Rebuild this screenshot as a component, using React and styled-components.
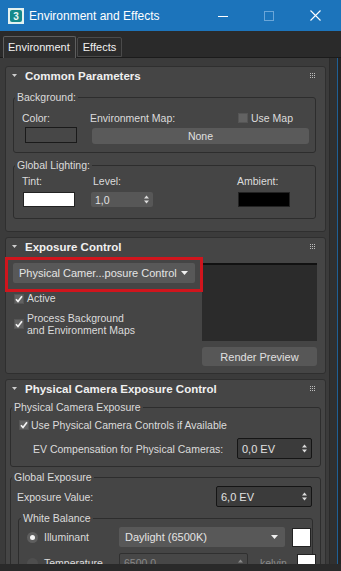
import React from 'react';
import styled, { createGlobalStyle } from 'styled-components';

const GlobalStyle = createGlobalStyle`
  html, body { margin: 0; padding: 0; background: #2b2b2b; }
  body { font-family: "Liberation Sans", Arial, sans-serif; }
  * { box-sizing: border-box; }
`;

const Window = styled.div`
  width: 341px;
  height: 571px;
  display: flex;
  flex-direction: column;
  overflow: hidden;
  background: #2b2b2b;
`;

const TitleBar = styled.div`
  height: 31px;
  flex: none;
  background: #1c74bb;
  display: flex;
  align-items: center;
  padding-left: 8px;
  color: #fff;
`;

const TitleText = styled.span`
  margin-left: 5px;
  font-size: 12px;
  color: #fff;
  white-space: nowrap;
`;

const WinControls = styled.div`
  margin-left: auto;
  display: flex;
  height: 100%;
  padding-right: 3px;
`;

const WinButton = styled.div`
  width: 46px;
  height: 100%;
  display: flex;
  align-items: center;
  justify-content: center;
`;

const TabBar = styled.div`
  height: 27px;
  flex: none;
  display: flex;
  align-items: flex-end;
  gap: 1px;
  padding-left: 3px;
  background: #2a2a2a;
  border-bottom: 1px solid #1b1b1b;
`;

const Tab = styled.div`
  height: ${p => (p.$active ? '22px' : '20px')};
  margin-bottom: ${p => (p.$active ? '-1px' : '0')};
  padding: ${p => (p.$active ? '3px 5px 0 4px' : '2px 5px 0 5px')};
  border: 1px solid ${p => (p.$active ? '#5e5e5e' : '#4a4a4a')};
  border-bottom: ${p => (p.$active ? 'none' : '1px solid #4a4a4a')};
  border-radius: 2px 2px 0 0;
  background: ${p => (p.$active ? '#2e2e2e' : '#2b2b2b')};
  color: #f2f2f2;
  font-size: 11px;
  line-height: 14px;
  white-space: nowrap;
`;

const Body = styled.div`
  flex: 1;
  min-height: 0;
  display: flex;
`;

const Content = styled.div`
  width: 329px;
  flex: none;
  background: #3b3b3b;
  padding: 8px 3px 0 5px;
  display: flex;
  flex-direction: column;
  gap: 5px;
  overflow: hidden;
`;

const ScrollTrack = styled.div`
  width: 8px;
  flex: none;
  background: #303030;
  border-left: 1px solid #2a2a2a;
`;

const Edge = styled.div`
  width: 4px;
  flex: none;
  background: #262626;
  border-left: 1px solid #1f5f95;
`;

const BottomStrip = styled.div`
  height: 7px;
  flex: none;
  background: #2a2a2a;
`;

const Rollout = styled.div`
  flex: none;
  background: #454545;
  border: 1px solid #2f2f2f;
  border-radius: 3px;
`;

const Header = styled.div`
  height: 17px;
  display: flex;
  align-items: center;
  padding: 0 10px 0 6px;
`;

const HeaderTitle = styled.span`
  margin-left: 8px;
  font-size: 11.5px;
  font-weight: bold;
  color: #f0f0f0;
  white-space: nowrap;
`;

const GripBox = styled.span`
  margin-left: auto;
  display: flex;
`;

const RolloutBody = styled.div`
  padding: ${p => p.$pad};
  display: flex;
  flex-direction: ${p => (p.$row ? 'row' : 'column')};
  gap: ${p => p.$gap || 0}px;
`;

const Group = styled.fieldset`
  margin: ${p => p.$margin || '0'};
  padding: 0;
  border: 1px solid #2d2d2d;
  border-radius: 3px;
  min-width: 0;
`;

const Legend = styled.legend`
  margin-left: ${p => p.$ml || 1}px;
  padding: 0 2px;
  font-size: 10.5px;
  line-height: 14px;
  color: #dcdcdc;
  white-space: nowrap;
`;

const GroupBody = styled.div`
  padding: ${p => p.$pad};
  display: ${p => (p.$grid ? 'grid' : 'flex')};
  flex-direction: column;
  grid-template-columns: ${p => p.$cols || 'none'};
  gap: ${p => p.$gap || 0}px;
`;

const Col = styled.div`
  display: flex;
  flex-direction: column;
  gap: ${p => p.$gap || 0}px;
  align-items: flex-start;
`;

const Row = styled.div`
  display: flex;
  align-items: center;
  gap: ${p => p.$gap || 0}px;
  padding: ${p => p.$pad || '0'};
  height: ${p => (p.$h ? p.$h + 'px' : 'auto')};
`;

const Label = styled.span`
  font-size: 10.5px;
  line-height: ${p => p.$lh || 14}px;
  color: ${p => (p.$dim ? '#8c8c8c' : '#dcdcdc')};
  white-space: nowrap;
  width: ${p => (p.$w ? p.$w + 'px' : 'auto')};
  margin-left: ${p => p.$ml || 0}px;
  flex: none;
`;

const Swatch = styled.div`
  width: ${p => p.$w}px;
  height: ${p => p.$h}px;
  margin-left: ${p => p.$ml || 0}px;
  background: ${p => p.$color};
  border: 1px solid ${p => p.$border || '#1c1c1c'};
  flex: none;
`;

const FlatButton = styled.div`
  width: ${p => p.$w}px;
  height: ${p => p.$h}px;
  margin-left: ${p => p.$ml || 0}px;
  background: #5a5a5a;
  border-radius: 3px;
  display: flex;
  align-items: center;
  justify-content: center;
  font-size: 10.5px;
  color: #e0e0e0;
  flex: none;
`;

const Spinner = styled.div`
  width: ${p => p.$w}px;
  height: ${p => p.$h}px;
  margin-left: ${p => p.$ml || 0}px;
  background: ${p => (p.$dark ? '#3b3b3b' : p.$dim ? '#474747' : '#575757')};
  border: ${p => (p.$dark ? '1px solid #151515' : p.$dim ? '1px solid #303030' : 'none')};
  border-radius: 2px;
  display: flex;
  align-items: center;
  padding: 0 4px 0 ${p => p.$pl || 4}px;
  font-size: ${p => p.$fs || 10.5}px;
  color: ${p => (p.$dim ? '#888' : '#e2e2e2')};
  flex: none;
  & > svg { margin-left: auto; }
`;

const Dropdown = styled.div`
  position: relative;
  width: ${p => p.$w}px;
  height: ${p => p.$h}px;
  background: #585858;
  border-radius: 2px;
  display: flex;
  align-items: center;
  padding: 0 7px 0 6px;
  font-size: 11px;
  color: #e4e4e4;
  white-space: nowrap;
  flex: none;
  & > svg { margin-left: auto; }
  ${p => p.$marked && `
    &::after {
      content: '';
      position: absolute;
      top: -6px; bottom: -9px; left: -8px; right: -8px;
      border: 3px solid #d0151d;
      pointer-events: none;
    }
  `}
`;

const Box = styled.span`
  width: 10px;
  height: 10px;
  flex: none;
  background: #626262;
  border: 1px solid #555;
  display: flex;
  align-items: center;
  justify-content: center;
  margin-left: ${p => p.$ml || 0}px;
`;

const RadioDot = styled.span`
  width: 11px;
  height: 11px;
  border-radius: 50%;
  flex: none;
  background: ${p => (p.$dim ? '#4e4e4e' : '#5e5e5e')};
  display: flex;
  align-items: center;
  justify-content: center;
  &::before {
    content: '';
    width: 5px;
    height: 5px;
    border-radius: 50%;
    background: ${p => (p.$on ? '#f4f4f4' : 'transparent')};
  }
`;

const Preview = styled.div`
  width: 115px;
  height: 78px;
  background: #2b2b2b;
  border-top: 2px solid #111;
`;

const PreviewButton = styled(FlatButton)`
  background: #575757;
  font-size: 11px;
`;

const Triangle = ({ w = 5, h = 3, color = '#cfcfcf' }) => (
  <svg width={w} height={h} viewBox={`0 0 ${w} ${h}`}>
    <polygon points={`0,0 ${w},0 ${w / 2},${h}`} fill={color} />
  </svg>
);

const Grip = () => (
  <svg width="5" height="5" viewBox="0 0 5 5">
    {[0, 2, 4].map(y => [0, 2, 4].map(x => <rect key={`${x}-${y}`} x={x} y={y} width="1" height="1" fill="#bdbdbd" />))}
  </svg>
);

const Arrows = ({ color = '#dcdcdc' }) => (
  <svg width="5" height="9" viewBox="0 0 5 9">
    <polygon points="0,3.5 2.5,0.5 5,3.5" fill={color} />
    <polygon points="0,5.5 2.5,8.5 5,5.5" fill={color} />
  </svg>
);

const Check = () => (
  <svg width="8" height="8" viewBox="0 0 8 8">
    <polyline points="1,4.2 3,6.5 7,1.2" fill="none" stroke="#f5f5f5" strokeWidth="1.7" />
  </svg>
);

const CheckBox = ({ on, ml }) => <Box $ml={ml}>{on && <Check />}</Box>;

const RolloutHeader = ({ title }) => (
  <Header>
    <Triangle />
    <HeaderTitle>{title}</HeaderTitle>
    <GripBox><Grip /></GripBox>
  </Header>
);

const AppIcon = () => (
  <svg width="16" height="16" viewBox="0 0 16 16">
    <rect x="0" y="0" width="16" height="16" fill="#e3f1f0" />
    <rect x="2" y="2" width="12" height="12" rx="2" fill="#14898b" />
    <text x="8" y="12.2" textAnchor="middle" fontSize="10" fontWeight="bold" fontFamily="Liberation Sans, Arial, sans-serif" fill="#e8f6f5">3</text>
  </svg>
);

export default function App() {
  return (
    <>
      <GlobalStyle />
      <Window>
        <TitleBar>
          <AppIcon />
          <TitleText>Environment and Effects</TitleText>
          <WinControls>
            <WinButton>
              <svg width="10" height="10" viewBox="0 0 10 10"><line x1="0" y1="5.5" x2="10" y2="5.5" stroke="#fff" strokeWidth="1" /></svg>
            </WinButton>
            <WinButton>
              <svg width="10" height="10" viewBox="0 0 10 10"><rect x="0.5" y="0.5" width="9" height="9" fill="none" stroke="#6aa6d8" strokeWidth="1" /></svg>
            </WinButton>
            <WinButton>
              <svg width="11" height="11" viewBox="0 0 11 11"><path d="M0.5 0.5 L10.5 10.5 M10.5 0.5 L0.5 10.5" stroke="#fff" strokeWidth="1.1" /></svg>
            </WinButton>
          </WinControls>
        </TitleBar>

        <TabBar>
          <Tab $active>Environment</Tab>
          <Tab>Effects</Tab>
        </TabBar>

        <Body>
          <Content>
            <Rollout>
              <RolloutHeader title="Common Parameters" />
              <RolloutBody $pad="6px 9px 12px 7px" $gap={5}>
                <Group>
                  <Legend>Background:</Legend>
                  <GroupBody $grid $cols="68px 1fr" $pad="7px 0 8px 8px">
                    <Col $gap={2}>
                      <Label>Color:</Label>
                      <Swatch $w={52} $h={16} $ml={3} $color="#474747" $border="#1a1a1a" />
                    </Col>
                    <Col $gap={3}>
                      <Row>
                        <Label $w={148}>Environment Map:</Label>
                        <CheckBox />
                        <Label $ml={3}>Use Map</Label>
                      </Row>
                      <FlatButton $w={217} $h={16} $ml={2}>None</FlatButton>
                    </Col>
                  </GroupBody>
                </Group>

                <Group>
                  <Legend>Global Lighting:</Legend>
                  <GroupBody $grid $cols="69px 146px 1fr" $pad="2px 0 11px 8px">
                    <Col $gap={4}>
                      <Label>Tint:</Label>
                      <Swatch $w={52} $h={15} $ml={1} $color="#ffffff" $border="#222" />
                    </Col>
                    <Col $gap={4}>
                      <Label $ml={2}>Level:</Label>
                      <Spinner $w={62} $h={15}>
                        1,0
                        <Arrows />
                      </Spinner>
                    </Col>
                    <Col $gap={4}>
                      <Label>Ambient:</Label>
                      <Swatch $w={52} $h={15} $ml={1} $color="#000000" $border="#222" />
                    </Col>
                  </GroupBody>
                </Group>
              </RolloutBody>
            </Rollout>

            <Rollout>
              <RolloutHeader title="Exposure Control" />
              <RolloutBody $pad="8px 8px 7px 7px" $row $gap={7}>
                <Col $gap={0}>
                  <Dropdown $w={182} $h={20} $marked>
                    Physical Camer...posure Control
                    <Triangle w={7} h={4} color="#f0f0f0" />
                  </Dropdown>
                  <Row $gap={3} $pad="9px 0 0 1px">
                    <CheckBox on />
                    <Label $lh={13}>Active</Label>
                  </Row>
                  <Row $gap={3} $pad="7px 0 0 1px">
                    <CheckBox on />
                    <Label $lh={12}>Process Background<br />and Environment Maps</Label>
                  </Row>
                </Col>
                <Col $gap={6}>
                  <Preview />
                  <PreviewButton $w={115} $h={19}>Render Preview</PreviewButton>
                </Col>
              </RolloutBody>
            </Rollout>

            <Rollout>
              <RolloutHeader title="Physical Camera Exposure Control" />
              <RolloutBody $pad="3px 4px 8px 4px" $gap={3}>
                <Group>
                  <Legend>Physical Camera Exposure</Legend>
                  <GroupBody $pad="4px 8px 7px 8px" $gap={6}>
                    <Row $gap={2} $h={14}>
                      <CheckBox on />
                      <Label>Use Physical Camera Controls if Available</Label>
                    </Row>
                    <Row $pad="0 0 0 14px">
                      <Label>EV Compensation for Physical Cameras:</Label>
                      <Spinner $dark $w={75} $h={21} $fs={11} $ml="auto" style={{ marginLeft: 'auto' }}>
                        0,0 EV
                        <Arrows />
                      </Spinner>
                    </Row>
                  </GroupBody>
                </Group>

                <Group>
                  <Legend>Global Exposure</Legend>
                  <GroupBody $pad="2px 0 8px 0" $gap={4}>
                    <Row $pad="0 8px 0 6px">
                      <Label>Exposure Value:</Label>
                      <Spinner $dark $w={96} $h={21} $fs={11} style={{ marginLeft: 'auto' }}>
                        6,0 EV
                        <Arrows />
                      </Spinner>
                    </Row>
                    <Group $margin="0 7px">
                      <Legend $ml={2}>White Balance</Legend>
                      <GroupBody $pad="2px 8px 8px 8px" $gap={6}>
                        <Row>
                          <RadioDot $on />
                          <Label $w={75} $ml={6}>Illuminant</Label>
                          <Dropdown $w={166} $h={20}>
                            Daylight (6500K)
                            <Triangle w={7} h={4} color="#f0f0f0" />
                          </Dropdown>
                          <Swatch $w={19} $h={19} $ml={7} $color="#ffffff" $border="#222" />
                        </Row>
                        <Row>
                          <RadioDot $dim />
                          <Label $w={75} $ml={6}>Temperature</Label>
                          <Spinner $dim $w={129} $h={20}>
                            6500,0
                            <Arrows color="#8a8a8a" />
                          </Spinner>
                          <Label $dim $w={37} $ml={12}>kelvin</Label>
                          <Swatch $w={19} $h={19} $color="#ffffff" $border="#222" />
                        </Row>
                      </GroupBody>
                    </Group>
                  </GroupBody>
                </Group>
              </RolloutBody>
            </Rollout>
          </Content>
          <ScrollTrack />
          <Edge />
        </Body>
        <BottomStrip />
      </Window>
    </>
  );
}
